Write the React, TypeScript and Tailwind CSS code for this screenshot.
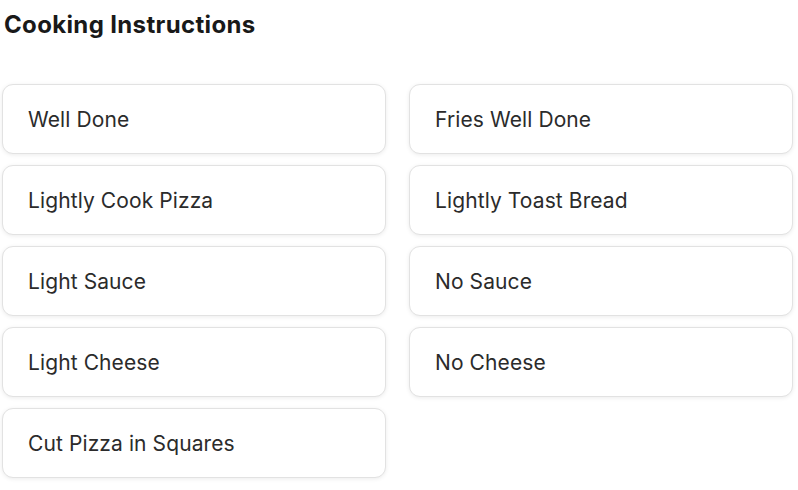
import React from "react";

const options = [
  "Well Done",
  "Fries Well Done",
  "Lightly Cook Pizza",
  "Lightly Toast Bread",
  "Light Sauce",
  "No Sauce",
  "Light Cheese",
  "No Cheese",
  "Cut Pizza in Squares",
];

const App = () => {
  return (
    <div
      className="w-[798px] h-[490px] bg-white text-[#191919]"
      style={{ fontFamily: "Inter, 'Noto Sans', sans-serif" }}
    >
      <h2 className="pl-1 pt-[11px] text-[24px] leading-[28px] font-bold tracking-[0.35px]">
        Cooking Instructions
      </h2>
      <div className="ml-[2px] mt-[45px] w-[791px] grid grid-cols-2 gap-x-[23px] gap-y-[11px]">
        {options.map((o) => (
          <button
            key={o}
            className="h-[70px] rounded-[11px] border border-[#e2e2e2] bg-white shadow-[0_1px_4px_rgba(0,0,0,0.08)] text-left pl-[25px] pt-[2px] text-[21px] tracking-[0.1px] text-[#2b2b2b]"
          >
            {o}
          </button>
        ))}
      </div>
    </div>
  );
};

export default App;
